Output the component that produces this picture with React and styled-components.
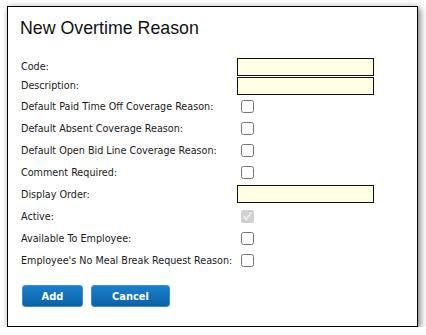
import styled, { createGlobalStyle } from 'styled-components';

const GlobalStyle = createGlobalStyle`
  html, body {
    margin: 0;
    padding: 0;
    background: #ffffff;
  }
`;

const rows = [
  { label: 'Code:', type: 'text' },
  { label: 'Description:', type: 'text' },
  { label: 'Default Paid Time Off Coverage Reason:', type: 'check' },
  { label: 'Default Absent Coverage Reason:', type: 'check' },
  { label: 'Default Open Bid Line Coverage Reason:', type: 'check' },
  { label: 'Comment Required:', type: 'check' },
  { label: 'Display Order:', type: 'text', tall: true },
  { label: 'Active:', type: 'check', checked: true, disabled: true },
  { label: 'Available To Employee:', type: 'check' },
  { label: "Employee's No Meal Break Request Reason:", type: 'check' },
];

export default function App() {
  return (
    <>
      <GlobalStyle />
      <Dialog>
        <Title>New Overtime Reason</Title>
        <Form>
          {rows.map(row => (
            <Row key={row.label} $tall={row.type === 'check' || row.tall}>
              <Label>{row.label}</Label>
              <Field>
                {row.type === 'text' ? (
                  <TextInput type="text" />
                ) : (
                  <CheckBox
                    type="checkbox"
                    defaultChecked={row.checked}
                    disabled={row.disabled}
                  />
                )}
              </Field>
            </Row>
          ))}
        </Form>
        <Buttons>
          <Button $width={61}>Add</Button>
          <Button $width={79}>Cancel</Button>
        </Buttons>
      </Dialog>
    </>
  );
}

const Dialog = styled.div`
  box-sizing: border-box;
  margin: 6px 0 0 7px;
  width: 411px;
  height: 321px;
  border: 1px solid #000;
  background: #fff;
  box-shadow: 2px 2px 7px rgba(0, 0, 0, 0.55);
  padding: 0 12px 0 12px;
`;

const Title = styled.h1`
  margin: 0;
  padding: 11px 0 0 0;
  height: 38px;
  font-family: 'Liberation Sans', Arial, sans-serif;
  font-size: 17.8px;
  font-weight: normal;
  color: #111;
`;

const Form = styled.div`
  display: flex;
  flex-direction: column;
  padding-left: 1px;
  margin-top: 1px;
`;

const Row = styled.div`
  display: grid;
  grid-template-columns: 216px auto;
  align-items: center;
  height: ${p => (p.$tall ? '22px' : '19px')};
`;

const Label = styled.span`
  font-family: 'DejaVu Sans Condensed', 'Liberation Sans', sans-serif;
  font-size: 10.7px;
  color: #1a1a1a;
  white-space: nowrap;
`;

const Field = styled.div`
  display: flex;
  align-items: center;
`;

const TextInput = styled.input`
  box-sizing: border-box;
  width: 137px;
  height: 18px;
  margin: 0;
  padding: 0 3px;
  border: 1px solid #111;
  background: #ffffe3;
  outline: none;
`;

const CheckBox = styled.input`
  width: 13px;
  height: 13px;
  margin: 0 0 0 4px;
`;

const Buttons = styled.div`
  display: flex;
  gap: 8px;
  margin-top: 14px;
  padding-left: 2px;
`;

const Button = styled.button`
  box-sizing: border-box;
  width: ${p => p.$width}px;
  height: 22px;
  padding: 0;
  border: 1px solid #3d8ed6;
  border-radius: 3px;
  background: linear-gradient(#1c7fcb, #0a62a8);
  color: #fff;
  font-family: 'DejaVu Sans Condensed', 'Liberation Sans', sans-serif;
  font-size: 11px;
  font-weight: bold;
  cursor: pointer;
`;
